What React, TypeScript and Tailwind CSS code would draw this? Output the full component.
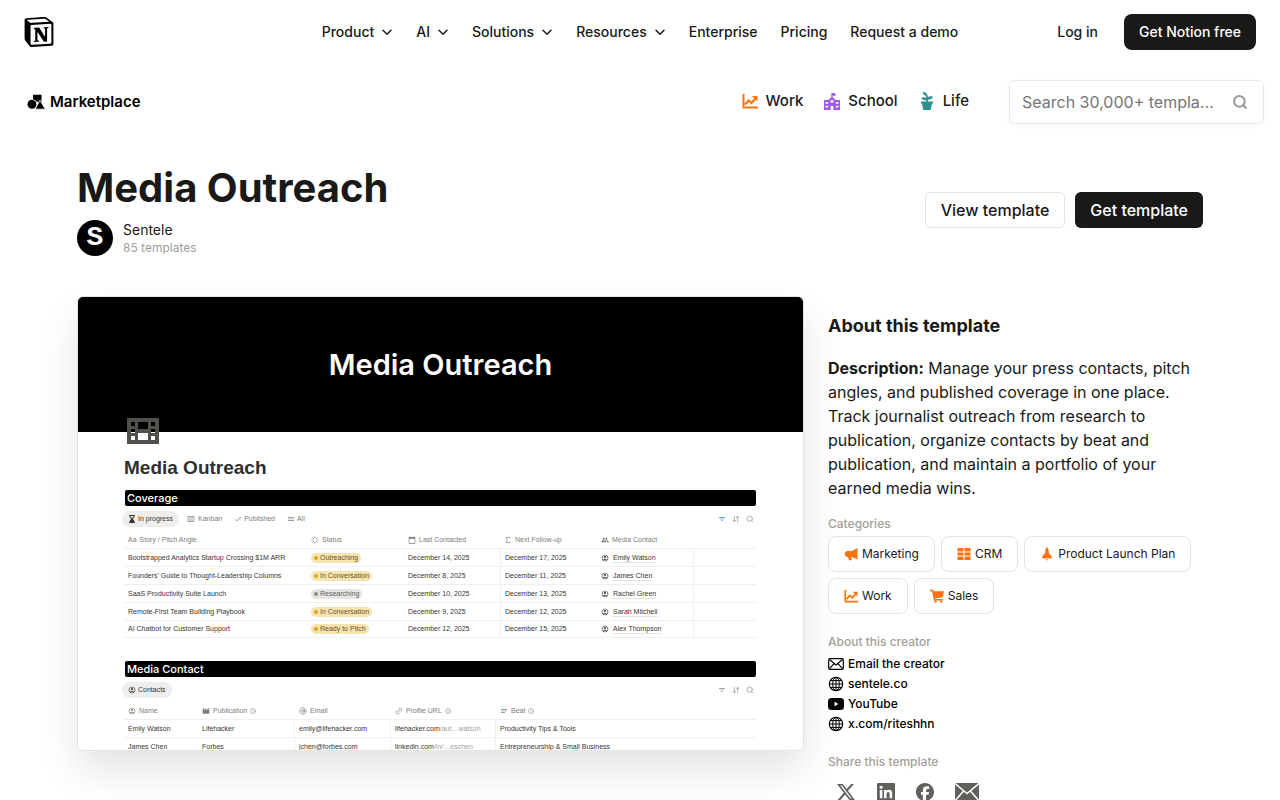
import React from "react";
import { ArrowDownUp, Loader, Sigma, Link2, Search, AtSign, Info } from "lucide-react";
import {
  MdFilterList,
  MdPeople,
  MdCalendarToday,
  MdCheck,
  MdMenu,
  MdNotes,
  MdMovie,
  MdOutlineAccountCircle,
  MdOutlineViewWeek,
} from "react-icons/md";
import { FaHourglassEnd, FaXTwitter, FaFacebook } from "react-icons/fa6";
import { SiNotion } from "react-icons/si";
import clsx from "clsx";

type IconProps = { className?: string };

const navItems = [
  { label: "Product", menu: true },
  { label: "AI", menu: true },
  { label: "Solutions", menu: true },
  { label: "Resources", menu: true },
  { label: "Enterprise", menu: false },
  { label: "Pricing", menu: false },
  { label: "Request a demo", menu: false },
];

const coverage = [
  { story: "Bootstrapped Analytics Startup Crossing $1M ARR", status: "Outreaching", last: "December 14, 2025", next: "December 17, 2025", contact: "Emily Watson" },
  { story: "Founders' Guide to Thought-Leadership Columns", status: "In Conversation", last: "December 8, 2025", next: "December 11, 2025", contact: "James Chen" },
  { story: "SaaS Productivity Suite Launch", status: "Researching", last: "December 10, 2025", next: "December 13, 2025", contact: "Rachel Green" },
  { story: "Remote-First Team Building Playbook", status: "In Conversation", last: "December 9, 2025", next: "December 12, 2025", contact: "Sarah Mitchell" },
  { story: "AI Chatbot for Customer Support", status: "Ready to Pitch", last: "December 12, 2025", next: "December 15, 2025", contact: "Alex Thompson" },
];

const contacts = [
  { name: "Emily Watson", publication: "Lifehacker", email: "emily@lifehacker.com", host: "lifehacker.com", path: "/aut…watson", beat: "Productivity Tips & Tools" },
  { name: "James Chen", publication: "Forbes", email: "jchen@forbes.com", host: "linkedin.com", path: "/in/…eschen", beat: "Entrepreneurship & Small Business" },
];

/* Icons */

function ChevronIcon({ className }: IconProps) {
  return (
    <svg viewBox="0 0 12 12" className={className} fill="none" stroke="currentColor" strokeWidth="1.500" strokeLinecap="round" strokeLinejoin="round" aria-hidden="true">
      <path d="M2 4.200 6 8.200l4-4" />
    </svg>
  );
}

function ShapesIcon({ className }: IconProps) {
  return (
    <svg viewBox="0 0 18 16" className={className} fill="currentColor" aria-hidden="true">
      <circle cx="5" cy="10.200" r="4.500" />
      <path d="M6 .8h8.500v7.500H10L6 6.500z" />
      <path d="M13 6.200 18.300 15.200H8z" stroke="#fff" strokeWidth=".8" />
      <path d="M5.700 5.500 9.800 7.500v3" fill="none" stroke="#fff" strokeWidth=".8" />
    </svg>
  );
}

function ChartIcon({ className }: IconProps) {
  return (
    <svg viewBox="0 0 16 16" className={className} fill="none" stroke="currentColor" aria-hidden="true">
      <path d="M1.500 1v13.500H16" strokeWidth="2" />
      <path d="M3 11.500 6.500 7.500l3 2.500 4-4.500" strokeWidth="2" />
      <path d="M10 3H15.500v5.500z" fill="currentColor" stroke="none" />
    </svg>
  );
}

function SchoolIcon({ className }: IconProps) {
  return (
    <svg viewBox="0 0 16 17" className={className} fill="currentColor" aria-hidden="true">
      <path
        fillRule="evenodd"
        d="M7.300 0H11v1.200h.8v1.600H8.700v1.500L11.800 7H16v10H9.400v-4H6.600v4H0V7h4.200l3.100-2.700zM8 6.800a1.500 1.500 0 1 0 0 3 1.500 1.500 0 0 0 0-3zM1.500 9v1.800h2.600V9zm0 3.800v1.800h2.600v-1.800zM11.900 9v1.800h2.600V9zm0 3.800v1.800h2.600v-1.800z"
      />
    </svg>
  );
}

function PlantIcon({ className }: IconProps) {
  return (
    <svg viewBox="0 0 12 18" className={className} fill="currentColor" aria-hidden="true">
      <path d="M1.500 0C4.700 0 6.800 1.700 6.900 5.200 8 4.400 9.700 4 12 4.700 11.300 6.800 9.300 7.800 6.900 7.700V9.500H12v2h-1L9.700 18H2.300L1 11.500H0v-2h5.300V8.200C3 8.600 1 7.600 0 5.800c2-.9 3.900-.7 5.200.2C5.100 4 4.300 3 2.500 2.600z" />
    </svg>
  );
}

function MegaphoneIcon({ className }: IconProps) {
  return (
    <svg viewBox="0 0 14 14" className={className} fill="currentColor" aria-hidden="true">
      <path d="M13.500 1v11.500L7.800 9.900H6.900l1 3.400H5.200L3.900 9.900C1.900 9.900.8 8.500.8 6.900S1.900 4 3.900 4h3.900z" />
    </svg>
  );
}

function TableIcon({ className }: IconProps) {
  return (
    <svg viewBox="0 0 14 14" className={className} fill="currentColor" aria-hidden="true">
      <path d="M.5 1h6v3.500h-6zM7.500 1h6v3.500h-6zM.5 5.400h6v3.200h-6zM7.500 5.400h6v3.200h-6zM.5 9.500h6V13h-6zM7.500 9.500h6V13h-6z" />
    </svg>
  );
}

function RocketIcon({ className }: IconProps) {
  return (
    <svg viewBox="0 0 14 14" className={className} fill="currentColor" aria-hidden="true">
      <path d="M7 0c1.200 1.200 1.700 2.500 1.700 4.200v1.600l2.900 3.400v2.300H8.700l-.5-.6H5.800l-.5.600H2.400V9.200l2.900-3.400V4.200C5.300 2.500 5.800 1.200 7 0zM6 11.700h2L7 14z" />
    </svg>
  );
}

function CartIcon({ className }: IconProps) {
  return (
    <svg viewBox="0 0 14 14" className={className} fill="currentColor" aria-hidden="true">
      <path d="M0 .8h3l.7 1.400H14L12.700 8.200 5 9.400l.2.600h7.500v1.400H4L2 2.300H0z" />
      <circle cx="5.500" cy="12.500" r="1.200" />
      <circle cx="11.300" cy="12.500" r="1.200" />
    </svg>
  );
}

function FilmIcon({ className }: IconProps) {
  return (
    <svg viewBox="0 0 32 26" className={className} fill="currentColor" aria-hidden="true">
      <path
        fillRule="evenodd"
        d="M0 0h32v26H0zM4 4v4h4V4zm0 7v4h4v-4zm0 7v4h4v-4zM24 4v4h4V4zm0 7v4h4v-4zm0 7v4h4v-4zM11 4v7h10V4zm0 11v7h10v-7z"
      />
    </svg>
  );
}

function GlobeIcon({ className }: IconProps) {
  return (
    <svg viewBox="0 0 16 16" className={className} fill="none" stroke="currentColor" aria-hidden="true">
      <circle cx="8" cy="8" r="6.700" strokeWidth="1.100" />
      <ellipse cx="8" cy="8" rx="3.300" ry="6.700" />
      <path d="M8 1.300v13.400M1.300 8h13.400M2.500 4.600h11M2.500 11.400h11" />
    </svg>
  );
}

function EnvelopeIcon({ className }: IconProps) {
  return (
    <svg viewBox="0 0 16 12" className={className} fill="none" stroke="currentColor" strokeWidth="1.200" aria-hidden="true">
      <rect x=".7" y=".7" width="14.600" height="10.600" rx="1.300" />
      <path d="M1.500 1.500 8 7l6.500-5.500M1.500 10.700l4.500-5M14.500 10.700l-4.500-5" />
    </svg>
  );
}

function PlayIcon({ className }: IconProps) {
  return (
    <svg viewBox="0 0 16 12" className={className} aria-hidden="true">
      <rect width="16" height="12" rx="3.500" fill="currentColor" />
      <path d="M6.500 3.700v4.600L10.400 6z" fill="#fff" />
    </svg>
  );
}

function LinkedInIcon({ className }: IconProps) {
  return (
    <svg viewBox="0 0 18 18" className={className} aria-hidden="true">
      <rect width="18" height="18" rx="1.300" fill="currentColor" />
      <g fill="#fff">
        <circle cx="4.100" cy="4.200" r="1.500" />
        <path d="M2.800 6.900h2.600v8.300H2.800zM7 6.900h2.500V8c.5-.8 1.400-1.300 2.500-1.300 2.500 0 3.200 1.600 3.200 4v4.500h-2.600v-4c0-1.300-.2-2.300-1.400-2.300-1.200 0-1.600.9-1.600 2.200v4.100H7z" />
      </g>
    </svg>
  );
}

function MailFilledIcon({ className }: IconProps) {
  return (
    <svg viewBox="0 0 24 18" className={className} aria-hidden="true">
      <rect width="24" height="18" fill="currentColor" />
      <path d="M0 .5 12 10.500 24 .5M.3 17.500l8.200-9.500M23.700 17.500l-8.200-9.500" fill="none" stroke="#fff" strokeWidth="1.500" />
    </svg>
  );
}

/* Template preview */

const headCell = "h-[17px] px-1 text-left font-normal text-[#7d7c78]";
const bodyCell = "h-[18px] border-t border-[#f0f0ef] px-1 whitespace-nowrap";

function SectionBar({ children }: { children: React.ReactNode }) {
  return (
    <h3 className="mx-px flex h-4 items-center rounded-xs bg-black px-[2px] font-[Inter,sans-serif] text-[11px] leading-4 font-medium text-white">
      {children}
    </h3>
  );
}

function ViewTools({ active }: { active?: boolean }) {
  return (
    <div className="mr-[3px] ml-auto flex items-center gap-1.5 text-[#8a8985]">
      <MdFilterList className={clsx("size-2", active && "text-[#2383e2]")} />
      <ArrowDownUp className="size-2" />
      <Search className="size-2" />
    </div>
  );
}

function Head({ icon, children, info }: { icon: React.ReactNode; children: React.ReactNode; info?: boolean }) {
  return (
    <span className="flex items-center gap-[3px]">
      <span className="flex min-w-2 [&>svg]:size-2">{icon}</span>
      {children}
      {info && <Info className="size-1.5" />}
    </span>
  );
}

function StatusPill({ status }: { status: string }) {
  const grey = status === "Researching";
  return (
    <span
      className={clsx(
        "inline-flex h-[10px] items-center gap-[2px] rounded-full px-[3px]",
        grey ? "bg-[#e6e5e3] text-[#5f5e5b]" : "bg-[#f5e3b0] text-[#6b5324]"
      )}
    >
      <span className={clsx("size-1 rounded-full", grey ? "bg-[#8e8b86]" : "bg-[#d9a521]")} />
      {status}
    </span>
  );
}

function TemplatePreview() {
  return (
    <section
      aria-label="Template preview"
      className="aspect-[727/455] overflow-hidden rounded-md border border-[#e3e3e3] bg-white font-['Liberation_Sans',Arial,sans-serif] text-[7px] leading-[10px] text-[#37352f] shadow-[0_20px_40px_rgba(0,0,0,0.11)]"
    >
      <div className="flex h-[135px] items-center justify-center bg-black font-[Inter,sans-serif] text-[29px] font-semibold text-white">
        Media Outreach
      </div>
      <div className="px-[46px]">
        <FilmIcon className="relative -mt-[14px] ml-[3px] h-[26px] w-8 text-[#50504d]" />
        <h2 className="mt-3 text-[19px] leading-6 font-bold text-[#2f2f2f]">Media Outreach</h2>

        <div className="mt-[10px]">
          <SectionBar>Coverage</SectionBar>
        </div>
        <div className="mt-[5px] -ml-[2px] flex h-4 items-center gap-3 text-[#7d7c78]">
          <button className="flex h-4 items-center gap-[2px] rounded-full bg-[#efeeed] px-1.5 text-[#37352f]">
            <FaHourglassEnd className="size-2" />
            In progress
          </button>
          <button className="-ml-1 flex items-center gap-[3px]">
            <MdOutlineViewWeek className="size-2" />
            Kanban
          </button>
          <button className="flex items-center gap-[2px]">
            <MdCheck className="size-2" />
            Published
          </button>
          <button className="flex items-center gap-[2px]">
            <MdMenu className="size-2" />
            All
          </button>
          <ViewTools active />
        </div>
        <table className="mt-1 w-full table-fixed border-separate border-spacing-0">
          <colgroup>
            <col className="w-[183px]" />
            <col className="w-[97px]" />
            <col className="w-[96px]" />
            <col className="w-[97px]" />
            <col className="w-[97px]" />
            <col />
          </colgroup>
          <thead>
            <tr>
              <th className={headCell}><Head icon="Aa">Story / Pitch Angle</Head></th>
              <th className={headCell}><Head icon={<Loader />}>Status</Head></th>
              <th className={headCell}><Head icon={<MdCalendarToday />}>Last Contacted</Head></th>
              <th className={headCell}><Head icon={<Sigma />}>Next Follow-up</Head></th>
              <th className={headCell}><Head icon={<MdPeople />}>Media Contact</Head></th>
              <td />
            </tr>
          </thead>
          <tbody>
            {coverage.map((row) => (
              <tr key={row.story} className="[&:last-child>td]:border-b">
                <td className={bodyCell}>{row.story}</td>
                <td className={bodyCell}><StatusPill status={row.status} /></td>
                <td className={bodyCell}>{row.last}</td>
                <td className={clsx(bodyCell, "border-l")}>{row.next}</td>
                <td className={clsx(bodyCell, "border-r")}>
                  <span className="flex items-center gap-1">
                    <MdOutlineAccountCircle className="size-2" />
                    <span className="underline decoration-[#e3e2df] underline-offset-2">{row.contact}</span>
                  </span>
                </td>
                <td className={bodyCell} />
              </tr>
            ))}
          </tbody>
        </table>

        <div className="mt-[23px]">
          <SectionBar>Media Contact</SectionBar>
        </div>
        <div className="mt-[5px] -ml-[2px] flex h-4 items-center">
          <button className="flex h-4 items-center gap-[2px] rounded-full bg-[#efeeed] px-1.5">
            <MdOutlineAccountCircle className="size-2" />
            Contacts
          </button>
          <ViewTools />
        </div>
        <table className="mt-1 w-full table-fixed border-separate border-spacing-0">
          <colgroup>
            <col className="w-[74px]" />
            <col className="w-[97px]" />
            <col className="w-[96px]" />
            <col className="w-[105px]" />
            <col />
          </colgroup>
          <thead>
            <tr>
              <th className={headCell}><Head icon={<MdOutlineAccountCircle />}>Name</Head></th>
              <th className={headCell}><Head icon={<MdMovie />} info>Publication</Head></th>
              <th className={headCell}><Head icon={<AtSign />}>Email</Head></th>
              <th className={headCell}><Head icon={<Link2 className="-rotate-45" />} info>Profile URL</Head></th>
              <th className={headCell}><Head icon={<MdNotes />} info>Beat</Head></th>
            </tr>
          </thead>
          <tbody>
            {contacts.map((row) => (
              <tr key={row.name}>
                <td className={bodyCell}>{row.name}</td>
                <td className={clsx(bodyCell, "border-r")}>{row.publication}</td>
                <td className={clsx(bodyCell, "border-r")}>{row.email}</td>
                <td className={clsx(bodyCell, "border-r")}>
                  {row.host}
                  <span className="text-[#a3a29e]">{row.path}</span>
                </td>
                <td className={bodyCell}>{row.beat}</td>
              </tr>
            ))}
          </tbody>
        </table>
      </div>
    </section>
  );
}

/* Sidebar */

const categories = [
  { label: "Marketing", icon: MegaphoneIcon },
  { label: "CRM", icon: TableIcon },
  { label: "Product Launch Plan", icon: RocketIcon },
  { label: "Work", icon: ChartIcon },
  { label: "Sales", icon: CartIcon },
];

const creatorLinks = [
  { label: "Email the creator", icon: EnvelopeIcon, size: "h-3 w-4" },
  { label: "sentele.co", icon: GlobeIcon, size: "size-4" },
  { label: "YouTube", icon: PlayIcon, size: "h-3 w-4" },
  { label: "x.com/riteshhn", icon: GlobeIcon, size: "size-4" },
];

const sideLabel = "text-xs font-medium text-[#a39e98]";

function Sidebar() {
  return (
    <aside className="pt-[18px]">
      <h2 className="text-lg leading-6 font-bold">About this template</h2>
      <p className="mt-[18px] text-base leading-6">
        <strong className="font-bold">Description:</strong> Manage your press contacts, pitch angles, and published
        coverage in one place. Track journalist outreach from research to publication, organize contacts by beat and
        publication, and maintain a portfolio of your earned media wins.
      </p>

      <h3 className={clsx(sideLabel, "mt-4")}>Categories</h3>
      <div className="mt-1 flex flex-wrap gap-1.5">
        {categories.map(({ label, icon: Icon }) => (
          <a
            key={label}
            href="#"
            className="flex h-9 items-center gap-1 rounded-lg border border-[#e3e3e3] bg-white px-[15px] text-xs"
          >
            <Icon className="size-[14px] text-[#f77311]" />
            {label}
          </a>
        ))}
      </div>

      <h3 className={clsx(sideLabel, "mt-5")}>About this creator</h3>
      <ul className="mt-1">
        {creatorLinks.map(({ label, icon: Icon, size }) => (
          <li key={label}>
            <a href="#" className="flex h-5 items-center gap-1 text-xs font-medium text-black">
              <Icon className={size} />
              {label}
            </a>
          </li>
        ))}
      </ul>

      <h3 className={clsx(sideLabel, "mt-5")}>Share this template</h3>
      <div className="mt-3 flex h-5 items-center gap-[21px] pl-2 text-[#62605d]">
        <a href="#" aria-label="Share on X"><FaXTwitter className="size-5" /></a>
        <a href="#" aria-label="Share on LinkedIn"><LinkedInIcon className="size-[18px]" /></a>
        <a href="#" aria-label="Share on Facebook"><FaFacebook className="size-[18px]" /></a>
        <a href="#" aria-label="Share by email"><MailFilledIcon className="h-[18px] w-6" /></a>
      </div>
    </aside>
  );
}

export default function App() {
  return (
    <div className="min-h-screen overflow-x-hidden bg-white font-[Inter,sans-serif] text-[#191918]">
      <header className="grid h-16 grid-cols-[1fr_auto_1fr] items-center px-6 text-sm font-medium">
        <a href="#" aria-label="Notion">
          <SiNotion className="size-[30px] text-black" />
        </a>
        <nav className="flex items-center gap-[23px]">
          {navItems.map((item) =>
            item.menu ? (
              <button key={item.label} className="flex items-center gap-[7px]">
                {item.label}
                <ChevronIcon className="size-3" />
              </button>
            ) : (
              <a key={item.label} href="#">{item.label}</a>
            )
          )}
        </nav>
        <div className="flex items-center justify-end gap-[26px]">
          <a href="#">Log in</a>
          <a href="#" className="flex h-9 items-center rounded-lg bg-[#191918] px-[15px] text-white">
            Get Notion free
          </a>
        </div>
      </header>

      <div className="flex items-center px-4 pt-4">
        <a href="#" className="ml-[11px] flex items-center gap-[5px] text-[15px] font-semibold text-black">
          <ShapesIcon className="h-4 w-[18px]" />
          Marketplace
        </a>
        <nav className="ml-auto flex items-center gap-[21px] pb-[2px] text-[15px] font-medium">
          <a href="#" className="flex items-center gap-2">
            <ChartIcon className="size-4 text-[#f77311]" />
            Work
          </a>
          <a href="#" className="flex items-center gap-2">
            <SchoolIcon className="h-[17px] w-4 text-[#9d5be0]" />
            School
          </a>
          <a href="#" className="flex items-center gap-2">
            <PlantIcon className="mx-[2px] h-[18px] w-3 text-[#2b918f]" />
            Life
          </a>
        </nav>
        <label className="ml-10 flex h-11 w-[255px] items-center gap-4 rounded-md border border-[#e8e8e8] bg-white px-3 shadow-[0_2px_6px_rgba(0,0,0,0.03)]">
          <input
            type="text"
            aria-label="Search templates"
            placeholder="Search 30,000+ templa..."
            className="min-w-0 flex-1 text-base outline-none placeholder:text-[#757575]"
          />
          <Search className="mr-[3px] size-4 shrink-0 text-[#9b9a97]" strokeWidth={3} />
        </label>
      </div>

      <main className="px-[77px] pt-10 pb-5">
        <div className="flex items-center justify-between">
          <div>
            <h1 className="text-[40px] leading-[48px] font-bold">Media Outreach</h1>
            <div className="mt-2 flex items-center gap-[10px]">
              <span className="flex size-9 items-center justify-center rounded-full bg-black font-['Liberation_Mono',monospace] text-[28px] leading-none font-bold text-white">
                S
              </span>
              <div>
                <a href="#" className="block text-sm leading-5">Sentele</a>
                <p className="text-xs leading-4 text-[#a39e98]">85 templates</p>
              </div>
            </div>
          </div>
          <div className="flex gap-[10px] text-base font-medium">
            <a href="#" className="flex h-9 items-center rounded-md border border-[#e3e3e3] px-[15px]">
              View template
            </a>
            <a href="#" className="flex h-9 items-center rounded-md bg-[#191918] px-[15px] text-white">
              Get template
            </a>
          </div>
        </div>

        <div className="mt-10 grid grid-cols-[minmax(0,727fr)_minmax(0,375fr)] items-start gap-6">
          <TemplatePreview />
          <Sidebar />
        </div>
      </main>
    </div>
  );
}
